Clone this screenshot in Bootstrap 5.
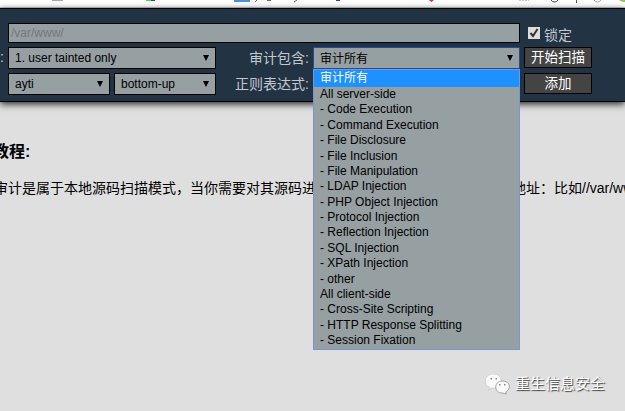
<!DOCTYPE html>
<html lang="zh-CN">
<head>
<meta charset="utf-8">
<title>源码审计</title>
<link href="https://cdn.jsdelivr.net/npm/bootstrap@5.3.0/dist/css/bootstrap.min.css" rel="stylesheet">
<style>
body{width:625px;height:411px;background:#dfdfdf;color:#000;font:14px/20px "Liberation Sans","Noto Sans CJK SC",sans-serif}
.topstrip{height:8px;background:#fff;border-bottom:1px solid #ccc}
.topstrip svg{display:block}
.panel{height:94px;background:#223344;border-top:1px solid #000;border-bottom:1px solid #000;box-shadow:0 2px 7px #222;padding-top:14px;color:#c3c8cc}
.line1{height:20px;margin-left:8px}
.line2{height:22px;margin-top:4px}
.field{background:#969fa2;border:1px solid #000;color:#000;font-size:12px;line-height:20px;height:22px;padding:0 5px 0 6px}
.pathbox{width:512px;height:20px;line-height:18px;color:#74797c;padding-left:2px;font-size:12px}
.lead-mark{width:8px;line-height:20px}
.caption{font-size:14px;line-height:22px}
.row-caption{width:93px;margin-right:4px;text-align:right;white-space:nowrap}
.act{width:68px;height:21px;background:#444;border:1px solid #000;color:#fff;font-size:13.5px;line-height:19px;padding:0;border-radius:0;margin-left:4px}
.focusbox{width:207px;border-color:#254c91}
.focusbox>span{line-height:22px}
.options{top:21px;left:-1px;width:207px;height:281px;background:#969fa2;border:1px solid #7896cf;z-index:5;color:#000;font-size:12px}
.options li{height:15.39px;line-height:15.39px;padding-left:6px;white-space:nowrap}
.options li.picked{height:17px;line-height:17px;background:#1e90ff;color:#fff}
.tick{width:12px;height:12px}
.guide{padding-top:40px}
.guide h1{font-size:16px;line-height:20px;font-weight:700;margin:0 0 16px -7px}
.guide p{font-size:14px;line-height:20px;margin:0 0 0 -6px}
.guide .after{margin-left:196px}
.brand{padding:0 20px 15px 0;color:#fff;font-size:15px;line-height:24px;text-shadow:1px 1px 1px #444}
</style>
<script src="https://cdn.jsdelivr.net/npm/bootstrap@5.3.0/dist/js/bootstrap.bundle.min.js"></script>
</head>
<body class="overflow-hidden d-flex flex-column">
<header class="topstrip flex-shrink-0">
<svg width="625" height="7"><path d="M52 .5h11" stroke="#aaa"/><path d="M146 .5h5" stroke="#3e3"/><path d="M151 .5h4" stroke="#33e"/><path d="M234 0h16v2h-16z" fill="#4e8fdc"/><path d="M255 2l2-2M267 .5h4M294 2l3-2" stroke="#666" fill="none"/><path d="M336 .5h4" stroke="#24b"/><path d="M429 0h5l-2.500 2z" fill="#c33"/><path d="M519 .5h10" stroke="#bdcfbd" stroke-dasharray="2 1"/><path d="M551 0q1 2 3.500 2t3.500-2" fill="none" stroke="#444"/><path d="M576.500 0v3" stroke="#555"/><path d="M594 0q1 2 3.500 2t3.500-2" fill="none" stroke="#aaa"/><path d="M619 0h6v2q-4 0-6-2z" fill="#8c4"/></svg>
</header>
<section class="panel flex-shrink-0">
<div class="line1 d-flex align-items-center"><div class="field pathbox">/var/www/</div>
<svg class="tick ms-2" viewBox="0 0 12 12"><path d="M0 0h12v12H0z" fill="#ddd"/><path d="M2.500 6l2.500 3 4.500-7" fill="none" stroke="#333" stroke-width="2"/></svg><span class="caption ms-1 pt-1">锁定</span></div>
<div class="line2 d-flex"><span class="lead-mark">:</span>
<div class="field d-flex justify-content-between" style="width:208px"><span>1. user tainted only</span><svg width="8" height="20"><path d="M1 7h6l-3 6z"/></svg></div>
<span class="caption row-caption">审计包含:</span>
<div class="field focusbox d-flex justify-content-between position-relative"><span>审计所有</span><svg width="8" height="20"><path d="M1 7h6l-3 6z"/></svg>
<ul class="options position-absolute list-unstyled m-0"><li class="picked">审计所有</li><li>All server-side</li><li>- Code Execution</li><li>- Command Execution</li><li>- File Disclosure</li><li>- File Inclusion</li><li>- File Manipulation</li><li>- LDAP Injection</li><li>- PHP Object Injection</li><li>- Protocol Injection</li><li>- Reflection Injection</li><li>- SQL Injection</li><li>- XPath Injection</li><li>- other</li><li>All client-side</li><li>- Cross-Site Scripting</li><li>- HTTP Response Splitting</li><li>- Session Fixation</li></ul></div>
<button class="act btn">开始扫描</button></div>
<div class="line2 d-flex"><span class="lead-mark"></span>
<div class="field d-flex justify-content-between" style="width:102px"><span>ayti</span><svg width="8" height="20"><path d="M1 7h6l-3 6z"/></svg></div>
<div class="field d-flex justify-content-between" style="width:102px;margin-left:4px"><span>bottom-up</span><svg width="8" height="20"><path d="M1 7h6l-3 6z"/></svg></div>
<span class="caption row-caption">正则表达式:</span><button class="act btn" style="margin-left:211px">添加</button></div>
</section>
<main class="guide text-nowrap"><h1>教程:</h1><p><span>审计是属于本地源码扫描模式，当你需要对其源码进</span><span class="after">地址：比如//var/www/</span></p></main>
<footer class="brand mt-auto d-flex justify-content-end align-items-center"><svg class="me-1" width="26" height="21" viewBox="0 0 25 21"><path d="M8 0C-2 0-2 11 4 13l-1 3 3-2c12 1 13-14 2-14z" fill="#fafafa" stroke="#bbb" stroke-width=".5"/><path d="M17 7c-9 0-9 12 0 12l4 1-1-2c6-3 5-11-3-11z" fill="#fafafa" stroke="#888" stroke-width=".7"/><path d="M5 4h1.500v1.500H5zM10 4h1.500v1.500H10zM13.500 10h1.500v1.500h-1.500zM18.500 10h1.500v1.500h-1.500z" fill="#888"/></svg><span>重生信息安全</span></footer>
</body>
</html>
